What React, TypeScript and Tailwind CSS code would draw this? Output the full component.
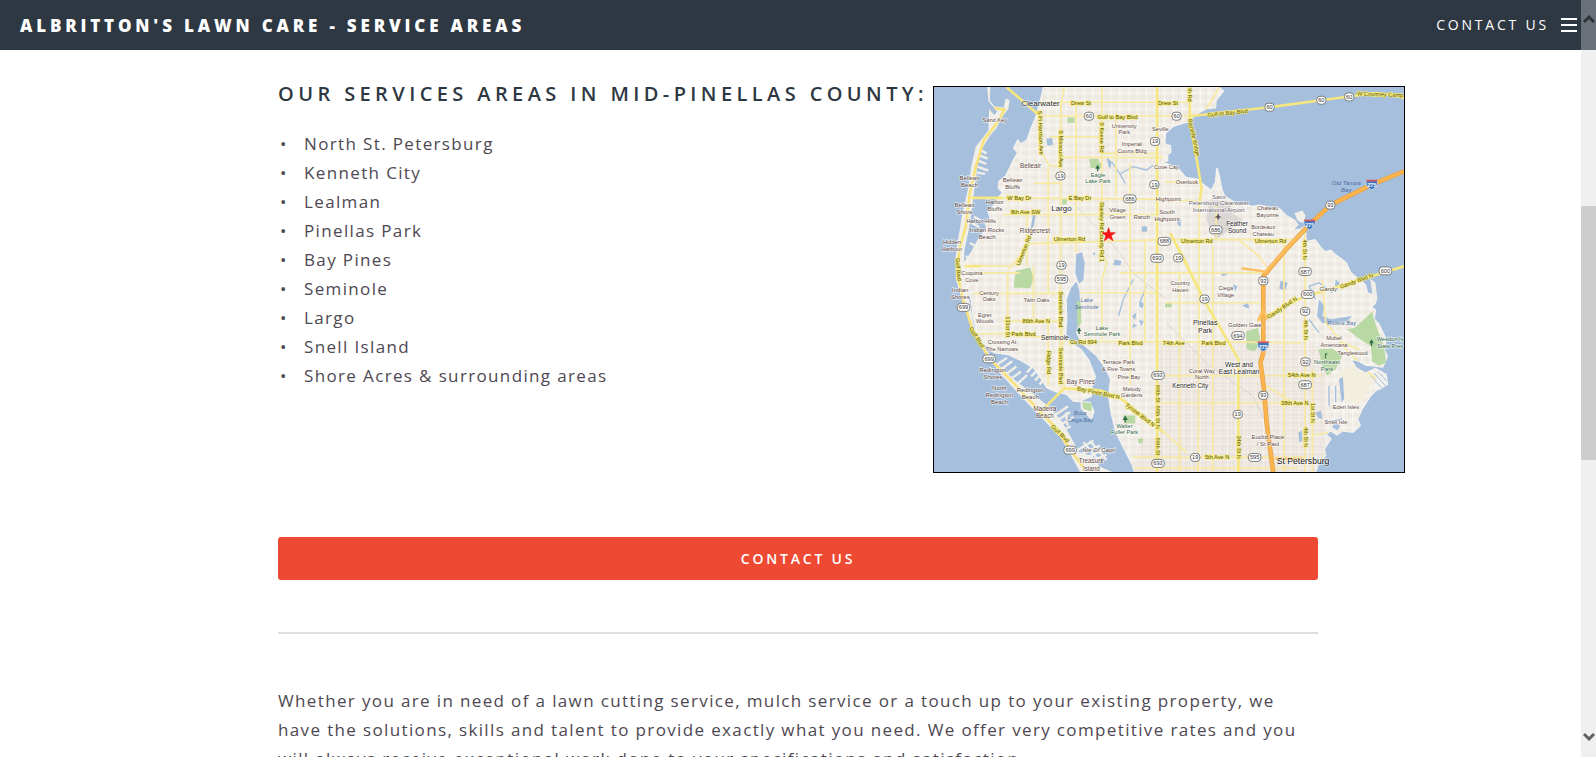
import { Fragment } from "react";

const AREAS = [
  "North St. Petersburg",
  "Kenneth City",
  "Lealman",
  "Pinellas Park",
  "Bay Pines",
  "Seminole",
  "Largo",
  "Snell Island",
  "Shore Acres & surrounding areas",
];

// x, baseline y of the first line, font size, lines, optional colour
type Label = [number, number, number, string[], string?];

const BROWN = "#5c4640";
const GREEN = "#2f6546";
const BLUE = "#4d70a4";
const DARK = "#1f1f1f";

const LABELS: Label[] = [
  [321, 56, 24, ["Clearwater"], DARK],
  [183, 106, 17, ["Sand Key"]],
  [573, 123, 17, ["University", "Park"]],
  [596, 178, 17, ["Imperial", "Courts Bldg"]],
  [682, 132, 17, ["Seville"]],
  [291, 245, 19, ["Belleair"]],
  [237, 286, 18, ["Belleair", "Bluffs"]],
  [107, 280, 18, ["Belleair", "Beach"]],
  [92, 362, 18, ["Belleair", "Shore"]],
  [183, 354, 18, ["Harbor", "Bluffs"]],
  [142, 410, 17, ["Harbor Hills"]],
  [160, 438, 18, ["Indian Rocks", "Beach"]],
  [54, 473, 17, ["Hidden", "Harbour"]],
  [384, 373, 24, ["Largo"], DARK],
  [304, 440, 19, ["Ridgecrest"]],
  [494, 270, 17, ["Eagle", "Lake Park"], GREEN],
  [553, 378, 17, ["Village", "Green"]],
  [626, 398, 17, ["Ranch"]],
  [700, 246, 17, ["Cove Cay"]],
  [762, 293, 17, ["Overlook"]],
  [706, 343, 18, ["Highpoint"]],
  [702, 383, 18, ["South", "Highpoint"]],
  [858, 336, 18, ["Saint", "Petersburg-Clearwater", "International Airport"], "#68636d"],
  [1005, 371, 17, ["Chateau", "Bayonne"]],
  [913, 418, 19, ["Feather", "Sound"], DARK],
  [992, 428, 17, ["Bordeaux", "Chateau"]],
  [1242, 294, 18, ["Old Tampa", "Bay"], BLUE],
  [114, 567, 17, ["Coquina", "Cove"]],
  [79, 618, 18, ["Indian", "Shores"]],
  [166, 626, 17, ["Century", "Oaks"]],
  [309, 649, 17, ["Twin Oaks"]],
  [153, 692, 17, ["Egret", "Woods"]],
  [460, 649, 17, ["Lake", "Seminole"], BLUE],
  [506, 731, 17, ["Lake", "Seminole Park"], GREEN],
  [364, 762, 20, ["Seminole"], DARK],
  [205, 775, 17, ["Crossing At", "The Narrows"]],
  [177, 858, 18, ["Redington", "Shores"]],
  [197, 914, 18, ["North", "Redington", "Beach"]],
  [290, 918, 18, ["Redington", "Beach"]],
  [334, 975, 19, ["Madeira", "Beach"]],
  [442, 894, 19, ["Bay Pines"]],
  [556, 835, 17, ["Terrace Park", "& Five Towns"]],
  [587, 879, 17, ["Pine Bay"]],
  [596, 915, 17, ["Melody", "Gardens"]],
  [440, 988, 17, ["Boca", "Ciega Bay"], BLUE],
  [574, 1026, 17, ["Walter", "Fuller Park"], GREEN],
  [497, 1101, 18, ["Isle Of Capri"]],
  [474, 1134, 19, ["Treasure", "Island"]],
  [742, 597, 17, ["Country", "Haven"]],
  [879, 612, 17, ["Ciega", "Village"]],
  [817, 716, 21, ["Pinellas", "Park"], DARK],
  [937, 722, 18, ["Golden Gate"]],
  [919, 843, 20, ["West and", "East Lealman"], DARK],
  [807, 861, 17, ["Coral Way", "North"]],
  [772, 908, 19, ["Kenneth City"], DARK],
  [1188, 616, 18, ["Gandy"]],
  [1228, 716, 17, ["Riviera Bay"], BLUE],
  [1205, 763, 17, ["Mobel", "Americana"]],
  [1261, 808, 17, ["Tanglewood"]],
  [1184, 836, 18, ["Northeast", "Park"], GREEN],
  [1374, 766, 17, ["Weedon Is", "State Pres"], GREEN],
  [1241, 971, 17, ["Eden Isles"]],
  [1211, 1014, 17, ["Snell Isle"]],
  [1006, 1062, 18, ["Euclid Place", "/ St Paul"]],
  [1112, 1135, 26, ["St Petersburg"], "#111111"],
];

// x, y, rotation, text
type RoadName = [number, number, number, string];

const ROAD_NAMES: RoadName[] = [
  [443, 54, 0, "Drew St"],
  [705, 54, 0, "Drew St"],
  [553, 96, 0, "Gulf to Bay Blvd"],
  [885, 84, -6, "Gulf to Bay Blvd"],
  [1344, 28, 2, "W Courtney Camp"],
  [316, 138, 88, "S Ft Harrison Ave"],
  [376, 186, 90, "S Missouri Ave"],
  [501, 152, 90, "S Keene Rd"],
  [778, 153, 78, "Bayside Bridge"],
  [766, 24, 90, "th Rd"],
  [257, 341, 0, "W Bay Dr"],
  [440, 341, 0, "E Bay Dr"],
  [276, 382, 0, "8th Ave SW"],
  [501, 388, 90, "Starkey Rd"],
  [501, 480, 90, "County Rd 1"],
  [408, 465, 0, "Ulmerton Rd"],
  [276, 495, -68, "Ulmerton Rd"],
  [792, 470, 0, "Ulmerton Rd"],
  [1014, 470, 0, "Ulmerton Rd"],
  [1113, 490, 90, "4th St N"],
  [68, 550, 86, "Gulf Blvd"],
  [124, 757, 58, "Gulf Blvd"],
  [376, 1048, 45, "Gulf Blvd"],
  [308, 710, 0, "86th Ave N"],
  [217, 722, 90, "131st St"],
  [270, 751, 0, "Park Blvd"],
  [378, 670, 90, "Seminole Blvd"],
  [378, 840, 90, "Seminole Blvd"],
  [339, 830, 90, "Ridge Rd"],
  [450, 774, 0, "Co Rd 694"],
  [592, 776, 0, "Park Blvd"],
  [494, 927, 12, "Bay Pines Blvd N"],
  [617, 992, 37, "Tyrone Blvd N"],
  [669, 924, 90, "66th St"],
  [669, 995, 90, "66th St N"],
  [669, 1083, 90, "66th St"],
  [722, 776, 0, "74th Ave"],
  [842, 776, 0, "Park Blvd"],
  [1052, 670, -34, "Gandy Blvd N"],
  [1275, 590, -20, "Gandy Blvd N"],
  [1114, 732, 90, "4th St N"],
  [1108, 875, 0, "54th Ave N"],
  [1087, 957, 0, "38th Ave N"],
  [1135, 982, 90, "1st St N"],
  [1114, 1055, 90, "4th St N"],
  [912, 1085, 90, "34th St N"],
  [853, 1121, 0, "5th Ave N"],
];

const SHIELDS: [number, number, string][] = [
  [467, 88, "60"], [731, 88, "60"], [1011, 61, "60"], [1167, 40, "60"], [1251, 30, "60"],
  [666, 164, "19"], [381, 268, "19"], [664, 294, "19"], [590, 337, "686"], [849, 430, "686"],
  [1194, 356, "93"], [672, 516, "693"], [694, 465, "688"], [384, 537, "19"], [384, 579, "595"],
  [736, 515, "19"], [1118, 556, "687"], [1360, 554, "600"], [89, 664, "699"], [166, 819, "699"],
  [410, 1094, "699"], [675, 869, "693"], [675, 1134, "693"], [992, 584, "93"], [815, 639, "19"],
  [1126, 625, "600"], [1118, 676, "92"], [916, 749, "694"], [1119, 828, "92"], [1118, 897, "687"],
  [992, 929, "93"], [915, 986, "19"], [787, 1116, "19"], [966, 1116, "595"],
];

const INTERSTATES: [number, number][] = [[1319, 294], [1132, 414], [992, 781]];

const MAINLAND =
  "M330 0 L318 50 L306 92 L290 130 L280 160 L262 172 L252 160 L240 184 L252 198 L238 222 L228 244 L216 268 L196 284 L194 304 L206 318 L196 330 L182 356 L162 372 L170 396 L154 410 L160 428 L142 448 L128 470 L112 500 L92 528 L92 560 L98 606 L112 640 L118 690 L126 730 L150 772 L180 800 L224 806 L262 824 L300 846 L324 880 L340 906 L366 918 L400 926 L420 946 L470 950 L482 978 L474 1000 L444 968 L444 944 L474 932 L476 902 L486 872 L466 822 L442 790 L414 772 L396 752 L400 700 L398 640 L410 606 L430 582 L440 612 L444 690 L430 740 L446 772 L490 810 L516 846 L532 880 L526 930 L534 984 L548 1040 L572 1088 L598 1140 L604 1161 L1150 1161 L1160 1130 L1180 1110 L1176 1090 L1196 1060 L1180 1046 L1196 1036 L1214 1048 L1230 1036 L1262 1040 L1284 1020 L1276 1000 L1290 970 L1316 930 L1340 906 L1366 894 L1362 866 L1330 848 L1300 862 L1272 846 L1256 820 L1280 826 L1300 838 L1352 844 L1366 812 L1356 790 L1362 760 L1348 730 L1340 714 L1326 700 L1330 672 L1318 662 L1330 650 L1322 626 L1306 620 L1300 596 L1278 578 L1256 560 L1242 530 L1230 520 L1208 504 L1196 492 L1178 496 L1166 484 L1148 460 L1122 466 L1118 420 L1104 428 L1080 432 L1096 414 L1084 400 L1062 388 L1040 366 L1010 362 L980 356 L960 360 L930 352 L908 350 L890 338 L876 330 L868 310 L858 262 L852 244 L848 286 L836 312 L812 294 L794 278 L758 272 L740 250 L720 238 L688 226 L704 222 L704 204 L714 196 L712 176 L696 172 L696 160 L698 138 L722 118 L770 104 L786 84 L820 66 L848 62 L850 40 L872 12 L858 0 Z";

const BARRIER =
  "M170 0 L168 40 L182 58 L210 62 L216 34 L228 40 L224 66 L206 90 L188 124 L168 148 L146 184 L132 226 L126 272 L120 322 L112 384 L104 432 L92 490 L90 530 L96 590 L108 650 L120 720 L150 780 L184 828 L240 880 L300 926 L350 966 L384 1006 L412 1054 L436 1100 L478 1112 L500 1144 L540 1161 L440 1161 L416 1116 L384 1060 L320 992 L260 930 L204 868 L164 812 L130 750 L104 700 L84 640 L66 580 L64 520 L74 450 L84 390 L104 300 L112 240 L126 180 L164 130 L166 66 L182 84 L190 74 L164 42 L160 0 Z";

const MAJOR_ROADS = [
  "M218 0 L320 88 L772 88", "M320 88 L322 190 L346 236 L380 240 M320 46 H772", "M392 0 L382 60 L380 906",
  "M506 0 V500 L520 530 L506 580 V760", "M672 0 V1161", "M771 0 V96 L806 304 L800 360 L796 1161",
  "M770 88 L1011 61 L1240 30 L1330 18 L1400 26 L1416 34", "M112 334 L700 338 M206 384 H672",
  "M224 550 L290 472 L700 460 H1080", "M92 540 L120 538 L240 540", "M590 230 V900",
  "M126 744 L240 742 L400 766 L1106 770", "M120 622 H380 M206 706 H380 M222 560 V742 M344 700 V900",
  "M316 984 L392 908 L500 914 L560 936 L692 1040 L760 1100", "M392 908 L384 700",
  "M712 440 L752 510 L818 650 L900 790 L917 820 V1161", "M976 704 L1110 634 L1290 580 L1416 540",
  "M1118 430 V1161", "M1140 850 V1161 M1054 460 V1161", "M676 870 H1170 M672 952 H1120 M600 1116 H1120 M604 1148 H1100",
  "M860 0 L800 100 M696 286 H812 M696 342 H790", "M850 460 V350 M920 462 L980 510 L1010 554",
  "M1000 900 L1080 950 M440 620 H670 M506 200 H672 M380 212 H690",
  "M120 560 H260 M560 560 H1000 M696 650 H980 M840 480 V1161 M740 560 V1161",
  "M1170 580 L1180 710 L1230 770 L1280 790 M1140 1050 L1190 1040 M1222 770 L1330 880",
  "M344 240 V620 M428 40 V500 M280 380 V540 M548 100 V330 M300 540 V700 M636 460 V770 M350 150 H506 M300 290 H380",
];

const COAST_ROAD =
  "M182 64 L212 68 L196 100 L150 160 L126 240 L108 320 L96 420 L76 490 L72 570 L90 650 L116 730 L166 816 L232 884 L316 974 L370 1030 L410 1092 L452 1148";

const FINGERS = [
  "M140 190 L158 200 M136 206 L162 216 M132 222 L158 232 M130 240 L164 252 M128 258 L154 262",
  "M120 390 L142 404 M114 410 L136 422 M108 470 L126 480 M96 510 L116 520 M100 524 L112 534",
  "M190 836 L220 816 M200 852 L236 826 M214 868 L248 842 M230 880 L262 858 M250 896 L280 868",
  "M280 860 L300 838 M292 872 L316 850 M304 884 L326 862 M318 896 L334 876",
  "M362 990 L404 962 M372 1004 L410 980 M384 1016 L420 994 M392 1032 L412 1022 M398 980 L402 1020",
  "M428 1096 L480 1066 M440 1108 L500 1080 M452 1120 L512 1092 M466 1130 L520 1108 M450 1070 L500 1130 M470 1066 L520 1124",
];

const PARKS = [
  "M468 216 H496 V228 H504 V244 H472 Z", "M246 554 L290 544 L300 576 L290 606 L240 604 Z",
  "M940 736 L976 726 L984 770 L966 796 L942 790 Z", "M1296 700 L1320 676 L1332 720 L1356 780 L1362 830 L1340 840 L1320 826 L1316 780 L1280 758 L1244 730 L1266 726 Z",
  "M1158 790 L1200 788 L1230 810 L1210 850 L1184 870 L1170 840 Z", "M446 950 L476 952 L474 978 L450 970 Z",
  "M570 990 H606 V1014 H574 Z", "M614 1060 L630 1058 L628 1074 L614 1072 Z", "M430 640 L442 650 L444 710 L432 726 Z",
  "M402 92 H424 V108 H402 Z", "M696 650 H716 V664 H696 Z", "M386 336 H400 V354 H386 Z",
];

const PONDS = [
  "M338 156 L356 154 L358 174 L342 178 Z", "M428 504 L446 498 L454 530 L450 582 L436 592 L426 560 Z",
  "M544 520 L564 524 L562 538 L540 536 Z", "M298 384 L308 380 L300 420 L290 432 Z", "M626 420 H642 V436 H626 Z",
  "M596 690 L610 680 L606 702 Z", "M618 702 L632 706 L624 720 Z", "M600 712 L612 720 L598 726 Z", "M1044 584 L1066 590 L1058 612 L1040 608 Z",
  "M900 594 L914 600 L908 616 Z", "M1098 1040 L1108 1036 L1110 1066 L1100 1070 Z", "M928 660 L946 650 L950 668 Z",
  "M520 210 L536 226 L532 242 L548 262 L540 250 L526 240 Z", "M732 402 L742 398 L744 420 L734 416 Z", "M866 560 L880 556 L884 566 L868 570 Z",
  "M1150 980 L1166 976 L1170 1000 L1156 996 Z", "M1220 880 L1232 874 L1236 940 L1228 950 Z",
  "M1160 640 L1176 660 L1170 690 L1196 700 L1260 690 L1244 706 L1170 712 L1154 690 Z", "M1210 580 L1222 590 L1216 612 L1208 600 Z",
  "M1206 1010 L1224 1020 L1216 1034 L1200 1026 Z", "M478 500 L486 498 L484 510 Z", "M620 646 L632 652 L628 668 L618 660 Z",
];

function AreaMap() {
  return (
    <svg
      viewBox="0 0 1416 1161"
      role="img"
      aria-label="Map of mid-Pinellas County"
      className="block w-full font-['Liberation_Sans',Arial,sans-serif] tracking-normal"
    >
      <defs>
        <pattern id="streets" width="27" height="24" patternUnits="userSpaceOnUse">
          <rect width="27" height="24" fill="#f1ede6" />
          <path d="M0 6 H27 M8 0 V24" stroke="#e8e1da" strokeWidth="2" />
          <path d="M0 18 H27 M20 0 V24" stroke="#faf9f5" strokeWidth="3" />
        </pattern>
        <pattern id="blocks" width="12" height="12" patternUnits="userSpaceOnUse">
          <path d="M0 3 H12 M3 0 V12" stroke="#e5dbd5" strokeWidth="2" />
        </pattern>
        <clipPath id="land">
          <path d={MAINLAND} />
        </clipPath>
      </defs>
      <rect width="1416" height="1161" fill="#a5bfdd" />
      <path d={BARRIER} fill="#f2efe9" />
      <path d={MAINLAND} fill="url(#streets)" stroke="#f4f2ee" strokeWidth="4" />
      <g clipPath="url(#land)">
        <path d="M676 780 H1180 V1161 H600 L620 1060 H676 Z" fill="url(#blocks)" />
        <path d="M830 340 L890 344 L900 380 L930 400 L850 460 L820 400 Z" fill="#dcd6d4" />
        <path d="M1216 860 L1280 830 L1330 880 L1280 960 L1230 940 Z" fill="#f3efdf" />
        <path d="M420 350 L560 500 L600 560 L700 640 M700 710 L830 840 L960 930 L1000 1010" fill="none" stroke="#cfcac8" strokeWidth="2" />
      </g>
      <path d="M1086 380 L1110 372 L1120 388 L1112 410 L1096 404 Z M1314 578 L1330 590 L1336 640 L1326 660 Z" fill="#f2efe9" />
      <path d="M1320 900 L1360 866 L1368 896 L1340 914 Z" fill="#f4f2ee" />
      {PARKS.map((d) => (
        <path key={d} d={d} fill="#b9d9a4" />
      ))}
      {PONDS.map((d) => (
        <path key={d} d={d} fill="#a5bfdd" />
      ))}
      {FINGERS.map((d) => (
        <path key={d} d={d} fill="none" stroke="#f2efe9" strokeWidth="7" />
      ))}
      <g fill="none" stroke="#a5bfdd" strokeWidth="4">
        <path d="M536 226 L560 262 L576 290 M560 262 L600 240 L640 250 L660 236 M600 580 L570 640 L556 690 M640 600 L620 650" />
        <path d="M1150 640 L1130 600 L1160 590 L1200 620 M1190 900 V960 M1210 900 V950 M1160 740 L1130 700 M1230 1000 L1180 1010" />
        <path d="M1316 870 L1350 908 M1326 862 L1360 900 M1336 856 L1364 886" strokeWidth="3" />
      </g>
      <g fill="none" stroke="#f7e9a0" strokeWidth="5" clipPath="url(#land)">
        {MAJOR_ROADS.map((d) => (
          <path key={d} d={d} />
        ))}
      </g>
      <path d={COAST_ROAD} fill="none" stroke="#f7e27c" strokeWidth="8" />
      <g fill="none" stroke="#f5e680" strokeWidth="8">
        <path d="M218 0 L320 88 M771 0 V96 L806 304 L798 360 M770 88 L1011 61 L1240 30 L1330 18 L1400 26 L1416 34 M112 334 H206 M92 540 H140" />
        <path d="M316 984 L392 908 L500 914 L560 936 L692 1040 M712 440 L818 650 L917 820 V1161 M976 704 L1110 634 L1416 540 M672 0 V1161" />
      </g>
      <g fill="none" stroke="#e2a04a" strokeLinejoin="round">
        <path d="M1416 254 L1319 294 L1194 356 L1132 414 L1060 490 L992 570 L992 800 L984 830 L994 910 L1002 1010 L1022 1161" strokeWidth="14" />
        <path d="M1416 254 L1319 294 L1194 356 L1132 414 L1060 490 L992 570 L992 800 L984 830 L994 910 L1002 1010 L1022 1161" stroke="#fbb44b" strokeWidth="10" />
        <path d="M926 546 L1000 556 L1080 466 L1118 430 M976 704 L992 670 L1004 700 M1028 1120 H1110" stroke="#fbbf62" strokeWidth="7" />
      </g>
      {ROAD_NAMES.map(([x, y, turn, name]) => (
        <text
          key={`${name}${x}${y}`}
          transform={`translate(${x} ${y}) rotate(${turn})`}
          textAnchor="middle"
          fontSize="17"
          fill="#55510f"
          stroke="#f5ec7a"
          strokeWidth="4"
          strokeLinejoin="round"
          paintOrder="stroke"
        >
          {name}
        </text>
      ))}
      {SHIELDS.map(([x, y, n]) => (
        <Fragment key={`${n}${x}${y}`}>
          <rect
            x={x - (n.length > 2 ? 19 : 14)}
            y={y - 12}
            width={n.length > 2 ? 38 : 28}
            height="24"
            rx="10"
            fill="#fff"
            stroke="#7b7b7b"
            strokeWidth="3"
          />
          <text x={x} y={y + 6} textAnchor="middle" fontSize="17" fill="#333">
            {n}
          </text>
        </Fragment>
      ))}
      {INTERSTATES.map(([x, y]) => (
        <Fragment key={x}>
          <path
            d={`M${x - 16} ${y - 12} H${x + 16} Q${x + 22} ${y + 6} ${x} ${y + 16} Q${x - 22} ${y + 6} ${x - 16} ${y - 12} Z`}
            fill="#3d77c0"
            stroke="#e8eef6"
            strokeWidth="2"
          />
          <path d={`M${x - 17} ${y - 12} H${x + 17}`} stroke="#d3545c" strokeWidth="5" />
          <text x={x} y={y + 8} textAnchor="middle" fontSize="16" fontWeight="700" fill="#fff">
            275
          </text>
        </Fragment>
      ))}
      <g fill="#2f6b45">
        <path d="M493 234 l7 12 h-5 v8 h-4 v-8 h-5 Z M437 724 l7 12 h-5 v8 h-4 v-8 h-5 Z M576 990 l8 13 h-6 v8 h-4 v-8 h-6 Z M1318 760 l7 12 h-5 v8 h-4 v-8 h-5 Z" />
        <path d="M856 380 l3 8 8 5 h-8 l-1 6 h-4 l-1 -6 h-8 l8 -5 Z" fill="#555" />
        <path d="M1178 804 l8 -2 -6 8 2 8 h-4 Z" />
      </g>
      {LABELS.map(([x, y, size, lines, colour]) => (
        <text
          key={`${lines[0]}${x}${y}`}
          textAnchor="middle"
          fontSize={size}
          fill={colour ?? BROWN}
          stroke={colour === BLUE ? "none" : "#ffffff"}
          strokeOpacity="0.7"
          strokeWidth="4"
          strokeLinejoin="round"
          paintOrder="stroke"
          fontStyle={colour === BLUE ? "italic" : "normal"}
        >
          {lines.map((line, i) => (
            <tspan key={line} x={x} y={y + i * (size + 3)}>
              {line}
            </tspan>
          ))}
        </text>
      ))}
      <path d="M526 424 L531 439 H546 L534 448 L539 463 L526 454 L513 463 L518 448 L506 439 H521 Z" fill="#f31515" stroke="#f31515" strokeWidth="2" />
    </svg>
  );
}

function Scrollbar() {
  return (
    <div aria-hidden="true" className="absolute inset-y-0 right-0 z-20 flex w-[15px] flex-col bg-[#f0f0f0]">
      <div className="flex h-[50px] justify-center bg-[#6a7178] pt-3.5">
        <svg viewBox="0 0 12 10" className="h-2.5 w-3">
          <path d="M1 8 L6 3 L11 8" fill="none" stroke="#2c3238" strokeWidth="3" />
        </svg>
      </div>
      <div className="grow-[156]" />
      <div className="grow-[254] bg-[#cdcdcd]" />
      <div className="grow-[272]" />
      <div className="flex h-[25px] justify-center">
        <svg viewBox="0 0 12 10" className="h-2.5 w-3">
          <path d="M1 2 L6 7 L11 2" fill="none" stroke="#5f5f5f" strokeWidth="3" />
        </svg>
      </div>
    </div>
  );
}

export default function App() {
  return (
    <div className="relative h-screen overflow-hidden bg-white font-['Open_Sans',sans-serif] text-[17px] leading-[29px] tracking-[0.08em] text-[#4e4852]">
      <header className="flex h-[50px] items-center justify-between bg-[#2e3842] pr-[19px] pl-5 text-white">
        <h1 className="font-extrabold tracking-[0.225em] uppercase">
          <a href="#top">Albritton's Lawn Care - Service Areas</a>
        </h1>
        <nav className="flex items-center gap-3 text-sm tracking-[0.2em] uppercase">
          <a href="#contact">Contact Us</a>
          <button type="button" aria-label="Menu" className="flex w-4 flex-col gap-1">
            <span className="h-0.5 bg-white" />
            <span className="h-0.5 bg-white" />
            <span className="h-0.5 bg-white" />
          </button>
        </nav>
      </header>

      <main className="mx-auto max-w-[1040px] pt-7">
        <section className="flex">
          <div className="w-[655px] shrink-0">
            <h2 className="mb-5 pt-px text-xl leading-[30px] font-semibold tracking-[0.22em] whitespace-nowrap text-[#2e3842] uppercase">
              Our Services Areas in Mid-Pinellas County:
            </h2>
            <ul className="pl-0.5">
              {AREAS.map((area) => (
                <li key={area} className="flex">
                  <span aria-hidden="true" className="w-6">
                    •
                  </span>
                  {area}
                </li>
              ))}
            </ul>
          </div>
          <div className="mt-2 w-[472px] shrink-0 self-start border border-black">
            <AreaMap />
          </div>
        </section>

        <button
          type="button"
          className="mt-16 block h-[43px] w-full rounded-[3px] bg-[#ed4933] text-sm font-semibold tracking-[0.2em] text-white uppercase"
        >
          Contact Us
        </button>
        <hr className="my-[52px] border-t-2 border-[#dfdfdf]" />
        <p>
          Whether you are in need of a lawn cutting service, mulch service or a touch up to your existing property, we
          have the solutions, skills and talent to provide exactly what you need. We offer very competitive rates and
          you will always receive exceptional work done to your specifications and satisfaction.
        </p>
      </main>
      <Scrollbar />
    </div>
  );
}
